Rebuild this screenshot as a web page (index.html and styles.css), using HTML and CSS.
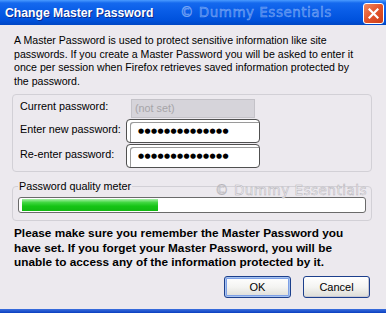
FILE: index.html
```html
<!DOCTYPE html>
<html lang="en">
<head>
    <meta charset="UTF-8">
    <title>Change Master Password</title>
    <link rel="stylesheet" href="styles.css">
</head>
<body>
    <div class="window">
        <div class="titlebar">
            <span class="title">Change Master Password</span>
            <span class="mark mark-title">© Dummy Essentials</span>
            <span class="close">
                <svg width="11" height="11" viewBox="0 0 11 11"><path d="M1.5 1.5 L9.5 9.5 M9.5 1.5 L1.5 9.5" stroke="#fff" stroke-width="2.2" stroke-linecap="square"/></svg>
            </span>
        </div>

        <div class="content">
            <p class="intro">A Master Password is used to protect sensitive information like site<br>passwords. If you create a Master Password you will be asked to enter it<br>once per session when Firefox retrieves saved information protected by<br>the password.</p>

            <div class="group fields">
                <label>Current password:</label>
                <div class="field-wrap"><div class="notset">(not set)</div></div>
                <label>Enter new password:</label>
                <div class="pw"><span class="dots">●●●●●●●●●●●●●●</span></div>
                <label>Re-enter password:</label>
                <div class="pw"><span class="dots">●●●●●●●●●●●●●●</span></div>
            </div>

            <fieldset class="group meter-group">
                <legend>Password quality meter</legend>
                <span class="mark mark-body">© Dummy Essentials</span>
                <div class="meter"><div class="fill" style="width: 136px"></div></div>
            </fieldset>

            <p class="warn">Please make sure you remember the Master Password you<br>have set. If you forget your Master Password, you will be<br>unable to access any of the information protected by it.</p>

            <div class="buttons">
                <button class="btn default">OK</button>
                <button class="btn">Cancel</button>
            </div>
        </div>
        <div class="frame-bottom"></div>
    </div>
</body>
</html>
```

FILE: styles.css
```css
body { margin: 0; background-color: #ece9ee; font-family: "Liberation Sans", Arial, sans-serif; font-size: 10.8px; color: #000; }
.window { width: 386px; height: 313px; display: flex; flex-direction: column; overflow: hidden; }

.titlebar {
    height: 25px; flex: none; position: relative;
    display: flex; align-items: center; padding-left: 5px;
    background: linear-gradient(#4a9bff 0, #1569ee 3px, #0a5ee8 40%, #0052dd 80%, #0046c4 100%);
}
.title { color: #fff; font-weight: bold; font-size: 12.2px; text-shadow: 1px 1px 0 #0b2a8c; }
.mark { position: absolute; font-family: "DejaVu Sans", sans-serif; letter-spacing: 0.5px; white-space: nowrap; }
.mark-title { left: 180px; top: 4px; font-size: 13.5px; color: rgba(120, 165, 240, 0.45); -webkit-text-stroke: 0.5px rgba(180, 205, 255, 0.6); }
.close {
    position: absolute; left: 363px; top: 3px; width: 19px; height: 19px;
    border: 1px solid #fff; border-radius: 3px;
    background: linear-gradient(135deg, #f08a62 0, #e2532a 50%, #cc3d18 100%);
    display: flex; align-items: center; justify-content: center;
}

.content { flex: 1; padding: 0 14px 0 12px; display: flex; flex-direction: column; }
.intro { margin: 9px 0 0 2px; font-size: 10.6px; line-height: 13.5px; white-space: nowrap; }

.group { border: 1px solid #d2d0d6; border-radius: 4px; }
.fields {
    margin-top: 6px; padding: 4px 7px 3px 7px;
    display: grid; grid-template-columns: 106px 134px; grid-template-rows: 19px 24px 24px;
    row-gap: 1px; align-items: center;
}
.fields label { white-space: nowrap; padding-bottom: 5px; }
.field-wrap { padding-left: 5px; }
.notset {
    width: 124px; height: 19px; line-height: 17px; padding-left: 3px; box-sizing: border-box;
    background-color: #d6d4da; border: 1px solid #c4c2c8; color: #a6a4a8;
}
.pw {
    height: 24px; box-sizing: border-box; border: 1px solid #505050; border-radius: 4px;
    background-color: #fff; box-shadow: inset 3px 2px 0 #fff, inset 4px 3px 0 #9a9a9a;
    display: flex; align-items: center; padding-left: 11px;
}
.dots { font-family: "DejaVu Sans", sans-serif; font-size: 7px; letter-spacing: 0.4px; }

.meter-group { margin: 7px 0 0 0; padding: 0 5px 7px 5px; position: relative; min-width: 0; }
.meter-group legend { padding: 0 1px; margin-left: 0; line-height: 14px; }
.mark-body { right: 4px; top: -11px; font-size: 13.5px; color: #f4f3f6; -webkit-text-stroke: 0.5px #b4b2b8; }
.meter {
    margin-top: 4px; height: 16px; box-sizing: border-box; padding: 1px 3px;
    border: 1px solid #6a6a6a; border-radius: 3px; background-color: #fff;
}
.fill { height: 12px; background: linear-gradient(#a6f0a6 0, #3fd63f 30%, #16c416 60%, #12b812 100%); }

.warn { margin: 5px 0 0 2px; font-weight: bold; font-size: 11.8px; line-height: 14.5px; white-space: nowrap; }

.buttons { display: flex; justify-content: flex-end; gap: 12px; margin-top: 6px; padding-right: 2px; }
.btn {
    width: 67px; height: 22px; font-family: inherit; font-size: 11px; color: #000;
    border: 1px solid #1c3f8c; border-radius: 3px;
    background: linear-gradient(#ffffff 0, #f4f4f2 50%, #dcdcd6 100%);
    box-shadow: inset -1px -1px 0 #c8c8d4;
}
.btn.default { box-shadow: inset 0 0 0 1px #a8c4f0, inset 0 0 0 2px #7ea0e6; }

.frame-bottom { height: 4px; flex: none; background: linear-gradient(#3b6fde, #0a3fc0); }
```
